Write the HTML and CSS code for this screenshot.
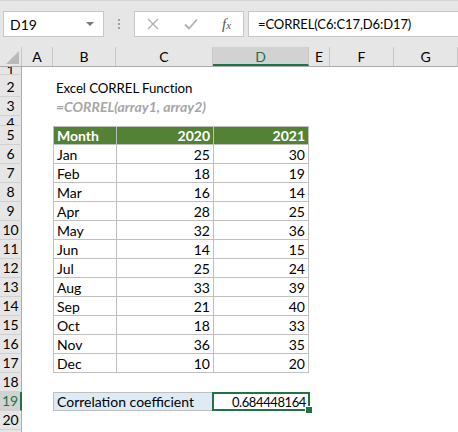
FILE: index.html
```html
<!DOCTYPE html>
<html lang="en">
  <head>
    <meta charset="UTF-8" />
    <title>Excel CORREL Function</title>
    <link rel="stylesheet" href="styles.css">
  </head>
  <body>
    <div class="formula-bar">
      <div class="name-box">
        <span>D19</span>
        <span class="caret"></span>
      </div>
      <div class="grip"><i></i><i></i><i></i></div>
      <div class="fx-buttons">
        <svg width="12" height="12" viewBox="0 0 12 12">
          <path d="M1 1 L11 11 M11 1 L1 11" stroke="#b0b0b0" stroke-width="1.4" fill="none" />
        </svg>
        <svg width="14" height="12" viewBox="0 0 14 12">
          <path d="M1 6.5 L5 10.5 L13 1.5" stroke="#b0b0b0" stroke-width="1.8" fill="none" />
        </svg>
        <span class="fx">f<small>x</small></span>
      </div>
      <div class="formula">=CORREL(C6:C17,D6:D17)</div>
    </div>

    <div class="sheet">
      <div class="row col-heads">
        <div class="corner"><span class="tri"></span></div>
        <div class="ch a">A</div>
        <div class="ch b">B</div>
        <div class="ch c">C</div>
        <div class="ch d selected">D</div>
        <div class="ch e">E</div>
        <div class="ch f">F</div>
        <div class="ch g">G</div>
      </div>

      <div class="row r1"><div class="rh">1</div></div>
      <div class="row r2">
        <div class="rh">2</div><div class="a"></div>
        <div class="cell title">Excel CORREL Function</div>
      </div>
      <div class="row">
        <div class="rh">3</div><div class="a"></div>
        <div class="cell syntax">=CORREL(array1, array2)</div>
      </div>
      <div class="row r4"><div class="rh">4</div></div>

      <div class="row">
        <div class="rh">5</div><div class="a"></div>
        <div class="cell b tb head">Month</div>
        <div class="cell c tb head num">2020</div>
        <div class="cell d tb head num">2021</div>
      </div>
      <div class="row">
        <div class="rh">6</div><div class="a"></div>
        <div class="cell b tb">Jan</div><div class="cell c tb num">25</div><div class="cell d tb num">30</div>
      </div>
      <div class="row">
        <div class="rh">7</div><div class="a"></div>
        <div class="cell b tb">Feb</div><div class="cell c tb num">18</div><div class="cell d tb num">19</div>
      </div>
      <div class="row">
        <div class="rh">8</div><div class="a"></div>
        <div class="cell b tb">Mar</div><div class="cell c tb num">16</div><div class="cell d tb num">14</div>
      </div>
      <div class="row">
        <div class="rh">9</div><div class="a"></div>
        <div class="cell b tb">Apr</div><div class="cell c tb num">28</div><div class="cell d tb num">25</div>
      </div>
      <div class="row">
        <div class="rh">10</div><div class="a"></div>
        <div class="cell b tb">May</div><div class="cell c tb num">32</div><div class="cell d tb num">36</div>
      </div>
      <div class="row">
        <div class="rh">11</div><div class="a"></div>
        <div class="cell b tb">Jun</div><div class="cell c tb num">14</div><div class="cell d tb num">15</div>
      </div>
      <div class="row">
        <div class="rh">12</div><div class="a"></div>
        <div class="cell b tb">Jul</div><div class="cell c tb num">25</div><div class="cell d tb num">24</div>
      </div>
      <div class="row">
        <div class="rh">13</div><div class="a"></div>
        <div class="cell b tb">Aug</div><div class="cell c tb num">33</div><div class="cell d tb num">39</div>
      </div>
      <div class="row">
        <div class="rh">14</div><div class="a"></div>
        <div class="cell b tb">Sep</div><div class="cell c tb num">21</div><div class="cell d tb num">40</div>
      </div>
      <div class="row">
        <div class="rh">15</div><div class="a"></div>
        <div class="cell b tb">Oct</div><div class="cell c tb num">18</div><div class="cell d tb num">33</div>
      </div>
      <div class="row">
        <div class="rh">16</div><div class="a"></div>
        <div class="cell b tb">Nov</div><div class="cell c tb num">36</div><div class="cell d tb num">35</div>
      </div>
      <div class="row">
        <div class="rh">17</div><div class="a"></div>
        <div class="cell b tb">Dec</div><div class="cell c tb num">10</div><div class="cell d tb num">20</div>
      </div>

      <div class="row"><div class="rh">18</div></div>
      <div class="row">
        <div class="rh selected">19</div><div class="a"></div>
        <div class="cell label">Correlation coefficient</div>
        <div class="cell d active num"><span class="value">0.684448164</span><span class="handle"></span></div>
      </div>
      <div class="row"><div class="rh">20</div></div>
      <div class="row"><div class="rh"></div></div>
    </div>
  </body>
</html>
```

FILE: styles.css
```css
* {
  margin: 0;
  padding: 0;
  box-sizing: border-box;
}
body {
  width: 458px;
  height: 432px;
  overflow: hidden;
  background: #fff;
  font-family: Lato, "Liberation Sans", sans-serif;
  font-size: 14px;
  color: #000;
}

/* formula bar */
.formula-bar {
  height: 47px;
  background: #e6e6e6;
  border-top: 1px solid #d4d4d4;
  display: flex;
  align-items: flex-start;
  padding-top: 10px;
}
.name-box {
  margin-left: 3px;
  width: 101px;
  height: 26px;
  background: #fff;
  border: 1px solid #c6c6c6;
  display: flex;
  align-items: center;
  justify-content: space-between;
  padding: 0 9px 0 6px;
  font-size: 14px;
}
.caret {
  width: 0;
  height: 0;
  border-left: 4px solid transparent;
  border-right: 4px solid transparent;
  border-top: 4px solid #777;
}
.grip {
  width: 30px;
  height: 26px;
  display: flex;
  flex-direction: column;
  align-items: center;
  justify-content: center;
  gap: 2px;
}
.grip i {
  width: 2px;
  height: 2px;
  background: #a0a0a0;
}
.fx-buttons {
  width: 110px;
  height: 26px;
  background: #fff;
  border: 1px solid #c6c6c6;
  display: flex;
  align-items: center;
  padding-left: 12px;
  gap: 25px;
}
.fx {
  font-family: "Liberation Serif", serif;
  font-style: italic;
  font-size: 15px;
  color: #555;
  margin-left: -1px;
}
.fx small {
  font-size: 11px;
}
.formula {
  flex: 1;
  margin-left: 4px;
  height: 26px;
  background: #fff;
  border: 1px solid #c6c6c6;
  border-right: none;
  padding-left: 9px;
  line-height: 24px;
  font-size: 13px;
  letter-spacing: -0.1px;
}

/* sheet */
.sheet {
  display: flex;
  flex-direction: column;
}
.row {
  display: flex;
  height: 19px;
}
.col-heads {
  height: 20px;
  background: #e6e6e6;
  border-bottom: 1px solid #ababab;
}
.corner {
  width: 22px;
  border-right: 1px solid #c6c6c6;
  position: relative;
}
.tri {
  position: absolute;
  right: 2px;
  bottom: 2px;
  width: 0;
  height: 0;
  border-left: 13px solid transparent;
  border-bottom: 13px solid #b9b9b9;
}
.ch {
  border-right: 1px solid #c6c6c6;
  text-align: center;
  line-height: 19px;
  font-size: 14px;
}
.ch.selected {
  background: #d2d2d2;
  color: #217346;
  border-bottom: 2px solid #217346;
}
.a { width: 31px; }
.b { width: 63px; }
.c { width: 97px; }
.d { width: 96px; }
.e { width: 21px; }
.f { width: 64px; }
.g { width: 64px; }

.r1 { height: 8px; }
.r2 { height: 22px; }
.r4 { height: 10px; }

.rh {
  width: 22px;
  flex: none;
  background: #e6e6e6;
  border-right: 1px solid #ababab;
  border-bottom: 1px solid #d0d0d0;
  display: flex;
  align-items: flex-end;
  justify-content: center;
  overflow: hidden;
  font-size: 14px;
  line-height: 18px;
}
.r1 .rh {
  line-height: 8px;
}
.r4 .rh {
  align-items: flex-start;
  line-height: 9px;
  padding-top: 2px;
}
.rh.selected {
  background: #d2d2d2;
  color: #217346;
  border-right: 2px solid #217346;
}

.cell {
  display: flex;
  align-items: center;
  padding: 0 3px;
  white-space: nowrap;
  position: relative;
}
.title {
  padding-top: 3px;
  font-size: 13.3px;
  letter-spacing: -0.1px;
}
.syntax {
  color: #a6a6a6;
  font-style: italic;
  font-weight: bold;
}
.tb {
  border-left: 1px solid #bfbfbf;
  border-bottom: 1px solid #bfbfbf;
}
.tb.d {
  border-right: 1px solid #bfbfbf;
}
.head {
  background: #548235;
  color: #fff;
  font-weight: bold;
  border-top: 1px solid #bfbfbf;
}
.num {
  justify-content: flex-end;
}
.label {
  width: 160px;
  background: #ddebf7;
  border: 1px solid #bfbfbf;
}
.active {
  border: 2px solid #217346;
  margin-left: -1px;
  width: 98px;
  padding-right: 2px;
}
.value {
  font-size: 13px;
  letter-spacing: -0.4px;
}
.handle {
  position: absolute;
  right: -4px;
  bottom: -4px;
  width: 6px;
  height: 6px;
  background: #217346;
  outline: 1px solid #fff;
}
```
